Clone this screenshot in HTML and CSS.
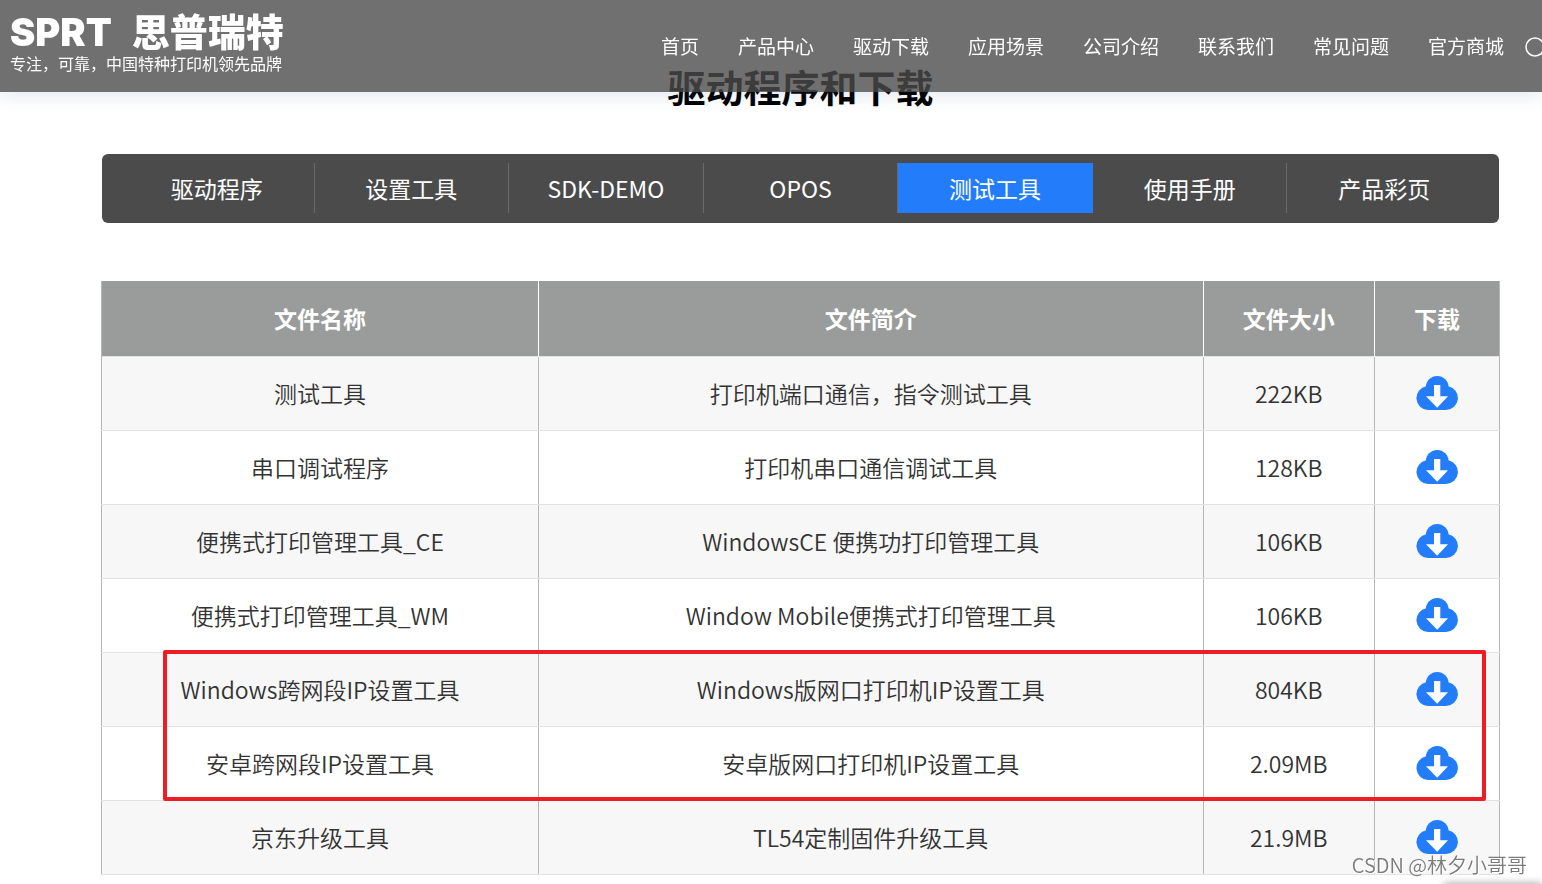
FILE: index.html
```
<!DOCTYPE html>
<html lang="zh-CN">
<head>
<meta charset="utf-8">
<title>驱动程序和下载</title>
<link rel="stylesheet" href="styles.css">
</head>
<body>
<svg class="defs" aria-hidden="true">
  <symbol id="cloud" viewBox="0 0 42 34">
    <path fill="#237dfb" d="M12 34A12 12 0 0 1 10.3 10.2A11.2 11.2 0 0 1 32.1 10.2A12 12 0 0 1 30 34Z"/>
    <circle fill="#237dfb" cx="21.2" cy="11.4" r="11.4"/>
    <path fill="#fff" d="M18 9H24.3V20.2H32L21.2 31.7L10 20.2H18Z"/>
  </symbol>
</svg>
<header class="header">
  <a class="brand" href="#">
    <span class="brand-name"><span>SPRT</span><span>思普瑞特</span></span>
    <span class="brand-tag">专注，可靠，中国特种打印机领先品牌</span>
  </a>
  <nav class="nav">
    <a href="#">首页</a>
    <a href="#">产品中心</a>
    <a href="#">驱动下载</a>
    <a href="#">应用场景</a>
    <a href="#">公司介绍</a>
    <a href="#">联系我们</a>
    <a href="#">常见问题</a>
    <a href="#">官方商城</a>
  </nav>
  <button class="search" type="button" aria-label="搜索">
    <svg viewBox="0 0 26 26" width="26" height="26" fill="none" stroke="#fff" stroke-width="1.5"><circle cx="11" cy="14" r="9"/><path d="M17.4 20.4L22 25"/></svg>
  </button>
</header>
<main class="page">
  <h1 class="title">驱动程序和下载</h1>
  <nav class="tabs">
    <a href="#">驱动程序</a>
    <a href="#">设置工具</a>
    <a href="#">SDK-DEMO</a>
    <a href="#">OPOS</a>
    <a class="active" href="#">测试工具</a>
    <a href="#">使用手册</a>
    <a href="#">产品彩页</a>
  </nav>
  <div class="files-wrap">
    <table class="files">
      <colgroup><col class="c-name"><col class="c-desc"><col class="c-size"><col class="c-get"></colgroup>
      <thead>
        <tr><th>文件名称</th><th>文件简介</th><th>文件大小</th><th>下载</th></tr>
      </thead>
      <tbody>
        <tr><td>测试工具</td><td>打印机端口通信，指令测试工具</td><td>222KB</td><td><a class="get" href="#" aria-label="下载"><svg><use href="#cloud"/></svg></a></td></tr>
        <tr><td>串口调试程序</td><td>打印机串口通信调试工具</td><td>128KB</td><td><a class="get" href="#" aria-label="下载"><svg><use href="#cloud"/></svg></a></td></tr>
        <tr><td>便携式打印管理工具_CE</td><td>WindowsCE 便携功打印管理工具</td><td>106KB</td><td><a class="get" href="#" aria-label="下载"><svg><use href="#cloud"/></svg></a></td></tr>
        <tr><td>便携式打印管理工具_WM</td><td>Window Mobile便携式打印管理工具</td><td>106KB</td><td><a class="get" href="#" aria-label="下载"><svg><use href="#cloud"/></svg></a></td></tr>
        <tr><td>Windows跨网段IP设置工具</td><td>Windows版网口打印机IP设置工具</td><td>804KB</td><td><a class="get" href="#" aria-label="下载"><svg><use href="#cloud"/></svg></a></td></tr>
        <tr><td>安卓跨网段IP设置工具</td><td>安卓版网口打印机IP设置工具</td><td>2.09MB</td><td><a class="get" href="#" aria-label="下载"><svg><use href="#cloud"/></svg></a></td></tr>
        <tr><td>京东升级工具</td><td>TL54定制固件升级工具</td><td>21.9MB</td><td><a class="get" href="#" aria-label="下载"><svg><use href="#cloud"/></svg></a></td></tr>
      </tbody>
    </table>
    <div class="highlight"></div>
  </div>
</main>
<div class="float-edge"></div>
<div class="watermark">CSDN @林夕小哥哥</div>
</body>
</html>
```
FILE: styles.css
```
* {
  box-sizing: border-box;
}

html {
  overflow: hidden;
}

body {
  margin: 0;
  background: #fff;
  color: #333;
  font-family: "Noto Sans CJK SC", sans-serif;
  font-size: 23px;
}

a {
  color: inherit;
  text-decoration: none;
}

.defs {
  display: none;
}

.header {
  position: fixed;
  top: 0;
  left: 0;
  right: 0;
  z-index: 2;
  display: flex;
  align-items: center;
  height: 92px;
  padding-left: 10px;
  background: rgba(75, 75, 75, 0.796);
  box-shadow: 0 4px 16px rgba(60, 90, 150, 0.14);
  color: #fff;
}

.brand {
  display: flex;
  flex-direction: column;
  padding-bottom: 4px;
  white-space: nowrap;
}

.brand-name {
  display: flex;
  gap: 20px;
  font-family: Inter, "Noto Sans CJK SC", sans-serif;
  font-size: 38px;
  font-weight: 900;
  line-height: 38px;
}

.brand-tag {
  font-size: 16px;
  line-height: 24px;
}

.nav {
  display: flex;
  gap: 39px;
  margin-left: auto;
  font-size: 19px;
  line-height: 28px;
  white-space: nowrap;
}

.search {
  display: flex;
  margin: 0 -8px 0 20px;
  padding: 0;
  border: 0;
  background: none;
}

.page {
  padding: 58px 42px 0 101px;
}

.title {
  margin: 0 0 40px;
  color: #000;
  font-size: 38px;
  font-weight: 700;
  line-height: 56px;
  text-align: center;
}

.tabs {
  display: flex;
  margin: 0 1px 58px;
  padding: 9px 18px 10px;
  border-radius: 6px;
  background: #4b4b4b;
  color: #fff;
}

.tabs a {
  flex: 1;
  border-right: 1px solid #6a6a6a;
  line-height: 50px;
  text-align: center;
}

.tabs a:last-child {
  border-right: 0;
}

.tabs .active {
  border-color: #237dfb;
  background: #237dfb;
}

.files-wrap {
  position: relative;
}

.files {
  width: 100%;
  border-collapse: collapse;
  table-layout: fixed;
  text-align: center;
}

.c-name {
  width: 31.25%;
}

.c-desc {
  width: 47.55%;
}

.c-size {
  width: 12.25%;
}

.files th {
  height: 75px;
  padding: 0;
  border-right: 1px solid #fff;
  background: #9a9c9b;
  color: #fff;
  font-weight: 700;
}

.files th:first-child {
  border-left: 1px solid #b6b6b6;
}

.files th:last-child {
  border-right-color: #b6b6b6;
}

.files td {
  height: 74px;
  padding: 0;
  border: 1px solid #b6b6b6;
  border-top-color: #e2e2e2;
  border-bottom-color: #e2e2e2;
  font-weight: 350;
}

.files tbody tr:nth-child(odd) {
  background: #f7f7f7;
}

.get {
  display: flex;
  justify-content: center;
}

.get svg {
  width: 42px;
  height: 34px;
}

.highlight {
  position: absolute;
  top: 369px;
  left: 4.4%;
  right: 1%;
  height: 151px;
  border: 4px solid #ee1c24;
  border-radius: 2px;
}

.float-edge {
  position: fixed;
  right: 0;
  bottom: -20px;
  width: 98px;
  height: 20px;
  box-shadow: 0 0 8px rgba(0, 0, 0, 0.4);
}

.watermark {
  position: fixed;
  right: 15px;
  bottom: 4px;
  color: rgba(80, 80, 80, 0.75);
  font-size: 20px;
  font-weight: 350;
  line-height: 30px;
  text-shadow: 1px 1px 0 #fff;
}
```
